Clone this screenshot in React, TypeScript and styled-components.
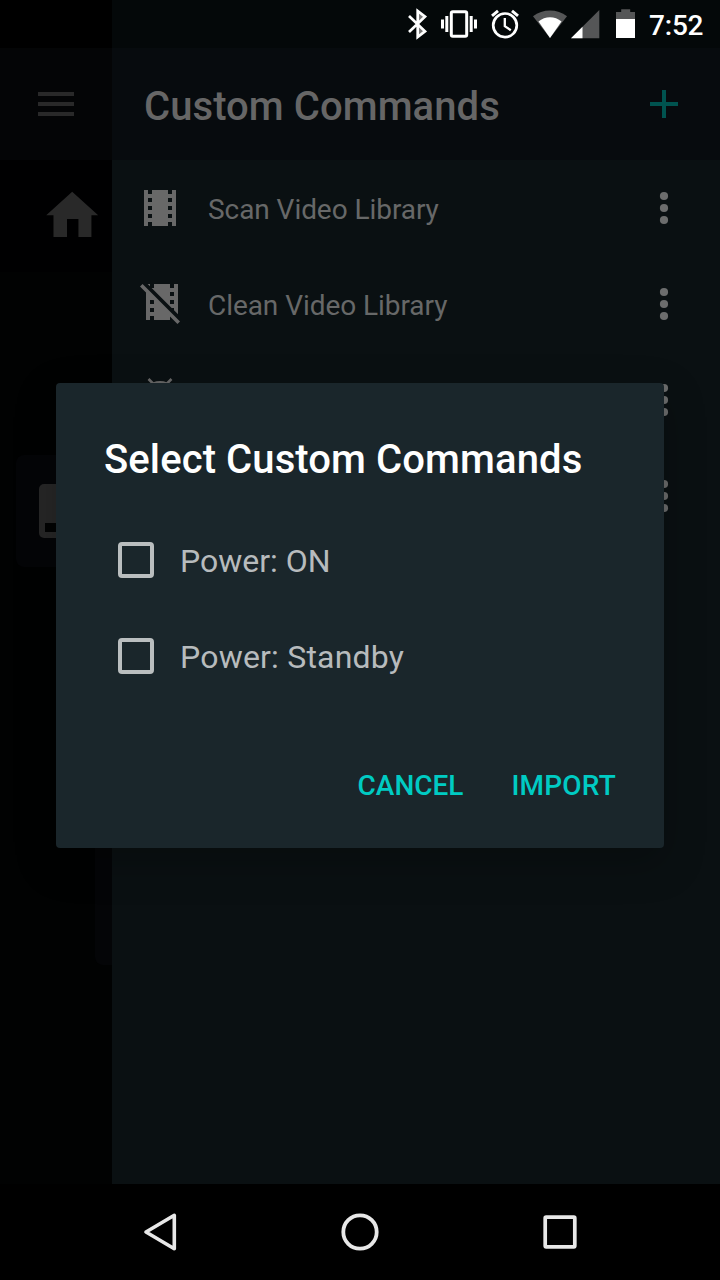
import React from "react";
import styled, { createGlobalStyle } from "styled-components";

const GlobalStyle = createGlobalStyle`
  * { box-sizing: border-box; }
  body { margin: 0; background: #000; }
`;

const Screen = styled.div`
  position: relative;
  display: flex;
  flex-direction: column;
  width: 720px;
  height: 1280px;
  overflow: hidden;
  background: #010202;
  font-family: Roboto, "Liberation Sans", sans-serif;
`;

const StatusBar = styled.header`
  display: flex;
  flex: none;
  height: 48px;
  background: linear-gradient(to right, #000 112px, #040809 112px);
`;

const StatusIcons = styled.svg`
  flex: none;
  margin-left: 400px;
  width: 240px;
  height: 48px;
`;

const Clock = styled.span`
  margin-left: 9px;
  font-size: 28px;
  font-weight: 500;
  line-height: 52px;
  letter-spacing: -0.2px;
  color: #fff;
`;

const Body = styled.div`
  display: flex;
  flex: 1;
  min-height: 0;
`;

const Rail = styled.aside`
  display: flex;
  flex: none;
  flex-direction: column;
  width: 112px;
  overflow: hidden;
`;

const RailHeader = styled.div`
  flex: none;
  display: flex;
  align-items: center;
  height: 112px;
  padding-left: 32px;
  background: #040506;
`;

const HomeTab = styled.div`
  flex: none;
  height: 112px;
  padding: 24px 0 0 41px;
  background: #000001;
`;

const Tile = styled.div<{ $left: number; $top: number; $height: number }>`
  flex: none;
  width: 200px;
  height: ${(p) => p.$height}px;
  margin: ${(p) => p.$top}px 0 0 ${(p) => p.$left}px;
  padding: 29px 0 0 23px;
  border-radius: 8px;
  background: #040507;
`;

const Panel = styled.main`
  flex: 1;
  background: #0a1012;
`;

const PanelHeader = styled.div`
  display: flex;
  align-items: center;
  height: 112px;
  padding: 0 32px;
  background: #070b0e;
`;

const PanelTitle = styled.h1`
  flex: 1;
  margin: 0;
  padding-top: 6px;
  font-size: 40px;
  font-weight: 500;
  line-height: 48px;
  letter-spacing: 0.07px;
  color: #666;
`;

const Row = styled.div`
  display: flex;
  align-items: center;
  height: 96px;
  padding: 0 32px 0 24px;
`;

const RowLabel = styled.span`
  flex: 1;
  padding: 4px 0 0 24px;
  font-size: 28px;
  line-height: 34px;
  letter-spacing: -0.06px;
  color: #676868;
`;

const Icon = styled.svg<{ $size?: number }>`
  display: block;
  flex: none;
  width: ${(p) => p.$size ?? 48}px;
  height: ${(p) => p.$size ?? 48}px;
  overflow: visible;
`;

const NavBar = styled.nav`
  display: flex;
  flex: none;
  align-items: center;
  justify-content: space-between;
  height: 96px;
  padding: 0 136px;
  background: #000;
`;

const Dialog = styled.section`
  position: absolute;
  left: 56px;
  top: 383px;
  display: flex;
  flex-direction: column;
  width: 608px;
  height: 465px;
  padding: 49px 48px 0;
  border-radius: 4px;
  background: #1a262b;
  box-shadow: 0 14px 40px rgba(0, 0, 0, 0.25);
`;

const DialogTitle = styled.h2`
  margin: 0 0 32px;
  font-size: 40px;
  font-weight: 500;
  line-height: 56px;
  letter-spacing: 0.1px;
  white-space: nowrap;
  color: #fff;
`;

const Option = styled.label`
  display: flex;
  align-items: center;
  height: 80px;
  margin-bottom: 16px;
  padding-left: 14px;
  font-size: 32px;
  color: #b7bbbd;
`;

const OptionText = styled.span<{ $tracking?: number }>`
  padding: 2px 0 0 26px;
  letter-spacing: ${(p) => p.$tracking ?? 0}px;
`;

const Checkbox = styled.span`
  width: 36px;
  height: 36px;
  border: 4px solid #babebf;
  border-radius: 4px;
`;

const Actions = styled.div`
  display: flex;
  justify-content: flex-end;
  gap: 48px;
  margin-top: 57px;
`;

const Action = styled.button<{ $tracking?: number }>`
  padding: 0;
  border: 0;
  background: none;
  font: 500 28px/34px Roboto, "Liberation Sans", sans-serif;
  letter-spacing: ${(p) => p.$tracking ?? 0}px;
  color: #00cbc3;
`;

const FILM =
  "M18 3v2h-2V3H8v2H6V3H4v18h2v-2h2v2h8v-2h2v2h2V3h-2zM8 17H6v-2h2v2zm0-4H6v-2h2v2zm0-4H6V7h2v2zm10 8h-2v-2h2v2zm0-4h-2v-2h2v2zm0-4h-2V7h2v2z";
const FILM_OFF =
  "M1 4.27L2.28 3L21 21.72L19.73 23L16 19.27V21H8V19H6V21H4V7.27L1 4.27M18 9V7H16V9H18M18 13V11H16V13H18M18 15H16.82L6.82 5H8V3H16V5H18V3H20V18.18L18 16.18V15M8 13V11.27L7.73 11H6V13H8M8 17V15H6V17H8M6 3V4.18L4.82 3H6Z";

const More = () => (
  <Icon viewBox="0 0 48 48" fill="#6c6d6d">
    <circle cx="24" cy="12" r="4.1" />
    <circle cx="24" cy="24" r="4.1" />
    <circle cx="24" cy="36" r="4.1" />
  </Icon>
);

const Command = ({ label, children }: { label?: string; children?: React.ReactNode }) => (
  <Row>
    <Icon viewBox="0 0 48 48" fill="#686868">{children}</Icon>
    <RowLabel>{label}</RowLabel>
    <More />
  </Row>
);

export default function App() {
  return (
    <Screen>
      <GlobalStyle />
      <StatusBar>
        <StatusIcons viewBox="400 0 240 48" fill="none" stroke="#fff">
          <path d="M417.7 11L425 16.7L417.7 24L425 31.3L417.7 37Z" fill="#777" stroke="none" />
          <path d="M409 16L425 31.3L417.7 37V11L425 16.7L409 32" strokeWidth="2.7" />
          <rect x="451.3" y="11.8" width="15.4" height="24.4" rx="1.5" strokeWidth="3" />
          <path d="M446.8 16v16M471.2 16v16M442.5 19.5v9M475.5 19.5v9" strokeWidth="3" />
          <circle cx="505" cy="25.3" r="11.8" strokeWidth="2.7" />
          <path d="M504.8 18v8.2l6 4" strokeWidth="2.3" />
          <path d="M492 15.8l6-5M518 15.8l-6-5" strokeWidth="3" />
          <g stroke="none">
            <path d="M533 16.2C542.5 8.6 557.5 8.6 567 16.2L550 38Z" fill="#555657" />
            <path d="M538.5 21.6C545 15.8 555 15.8 561.5 21.6L550 38Z" fill="#fff" />
            <path d="M571 38.3L599.3 10V38.3Z" fill="#555657" />
            <path d="M571 38.3L582.5 26.8V38.3Z" fill="#fff" />
            <path d="M616 19.2V12h5.2V9.3h9V12h4.8v7.2Z" fill="#555657" />
            <path d="M616 19h19v19h-19Z" fill="#fff" />
          </g>
        </StatusIcons>
        <Clock>7:52</Clock>
      </StatusBar>

      <Body>
        <Rail>
          <RailHeader>
            <Icon viewBox="0 0 24 24" fill="#292929">
              <path d="M3 18h18v-2H3v2zm0-5h18v-2H3v2zm0-7v2h18V6H3z" />
            </Icon>
          </RailHeader>
          <HomeTab>
            <Icon $size={62.4} viewBox="0 0 24 24" fill="#292929">
              <path d="M10 20.4v-6.9h4.4v6.9h5V12H22L12 3L2 12h2.8v8.4z" />
            </Icon>
          </HomeTab>
          <Tile $left={16} $top={183} $height={112}>
            <Icon $size={54} viewBox="0 0 54 54">
              <rect width="54" height="54" rx="5" fill="#272727" />
              <rect x="6" y="39" width="42" height="9" fill="#020303" />
            </Icon>
          </Tile>
          <Tile $left={95} $top={160} $height={238} />
        </Rail>

        <Panel>
          <PanelHeader>
            <PanelTitle>Custom Commands</PanelTitle>
            <Icon viewBox="0 0 24 24" fill="#00534f">
              <path d="M19 13h-6v6h-2v-6H5v-2h6V5h2v6h6v2z" />
            </Icon>
          </PanelHeader>
          <Command label="Scan Video Library">
            <path transform="scale(2)" d={FILM} />
          </Command>
          <Command label="Clean Video Library">
            <path transform="translate(2 -2) scale(2)" d={FILM_OFF} />
          </Command>
          <Command>
            <path
              d="M12.5 3l6 6M35.5 3l-6 6M14 11C18 4.8 30 4.8 34 11"
              fill="none"
              stroke="#686868"
              strokeWidth="2.6"
            />
          </Command>
          <Command />
        </Panel>
      </Body>

      <NavBar>
        <Icon viewBox="0 0 48 48" fill="none" stroke="#e8e8e8" strokeWidth="3.6" strokeLinejoin="round">
          <path d="M10 24L38.3 7.3V40.7Z" />
        </Icon>
        <Icon viewBox="0 0 48 48" fill="none" stroke="#e8e8e8" strokeWidth="3.8">
          <circle cx="24" cy="24" r="16.7" />
        </Icon>
        <Icon viewBox="0 0 48 48" fill="none" stroke="#e8e8e8" strokeWidth="3.7">
          <rect x="9.2" y="9.2" width="29.6" height="29.6" rx="1" />
        </Icon>
      </NavBar>

      <Dialog role="dialog">
        <DialogTitle>Select Custom Commands</DialogTitle>
        <Option>
          <Checkbox />
          <OptionText>Power: ON</OptionText>
        </Option>
        <Option>
          <Checkbox />
          <OptionText $tracking={0.2}>Power: Standby</OptionText>
        </Option>
        <Actions>
          <Action>CANCEL</Action>
          <Action $tracking={0.2}>IMPORT</Action>
        </Actions>
      </Dialog>
    </Screen>
  );
}
